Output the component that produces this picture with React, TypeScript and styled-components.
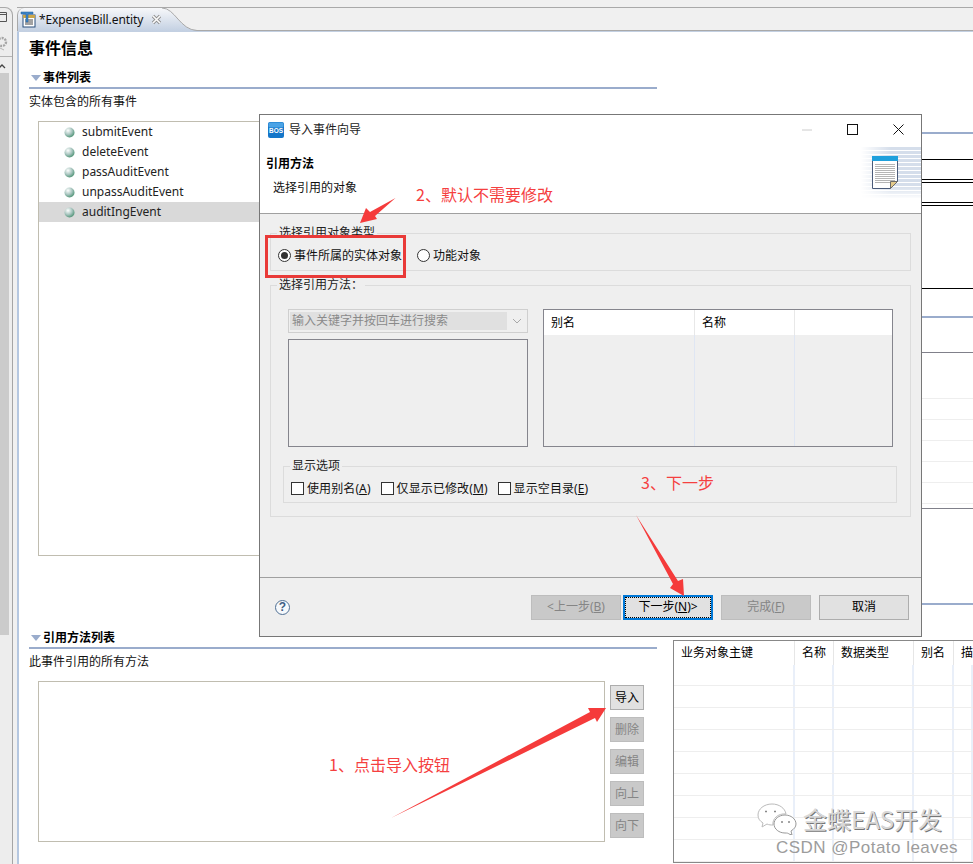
import React from "react";
import styled, { createGlobalStyle, css } from "styled-components";

const Global = createGlobalStyle`
  html, body { margin: 0; padding: 0; background: #f0f0f0; }
  * { box-sizing: border-box; }
`;

const FONT = `"Noto Sans", "Noto Sans CJK SC", sans-serif`;

const Page = styled.div`
  position: relative;
  width: 973px;
  height: 864px;
  overflow: hidden;
  display: flex;
  background: #f0f0f0;
  font: 12px/16px ${FONT};
  color: #111;
`;

/* left rail */
const Rail = styled.aside`
  flex: 0 0 13px;
  margin: 7px 4px 0 0;
  border-right: 1px solid #a5a5a5;
  border-top: 1px solid #a9a9a9;
  border-top-right-radius: 8px;
  background: #ededed;
  display: flex;
  flex-direction: column;
  overflow: hidden;
`;
const RailIcons = styled.div`
  height: 48px;
  flex: none;
  display: flex;
  flex-direction: column;
  align-items: flex-start;
`;
const RailDivider = styled.div`
  height: 1px;
  flex: none;
  background: #b5b5b5;
`;
const RailTrack = styled.div`
  height: 562px;
  flex: none;
  width: 9px;
  background: #cbcbcb;
`;

/* editor */
const Editor = styled.main`
  flex: 1;
  min-width: 0;
  display: flex;
  flex-direction: column;
`;
const TabStrip = styled.div`
  height: 24px;
  margin-top: 7px;
  flex: none;
  display: flex;
  align-items: flex-end;
  border-top: 1px solid #a9a9a9;
  border-bottom: 1px solid #a9a9a9;
`;
const TabBand = styled.div`
  height: 1px;
  flex: none;
  background: #c3d0e2;
`;
const Tab = styled.div`
  flex: 0 0 141px;
  height: 23px;
  margin-bottom: -1px;
  border-left: 1px solid #a9a9a9;
  border-top-left-radius: 7px;
  background: linear-gradient(#f7f8fa, #c3d0e2);
  display: flex;
  align-items: center;
  padding-left: 2px;
  gap: 3px;
  font-size: 12px;
  letter-spacing: -0.1px;
  white-space: nowrap;
`;
const TabIcon = styled.svg`
  flex: none;
`;
const TabLabel = styled.span`
  flex: none;
`;
const TabCurve = styled.svg`
  display: block;
  flex: none;
  margin-bottom: -1px;
`;
const TabClose = styled.svg`
  margin-left: 5px;
  flex: none;
  position: relative;
  z-index: 1;
`;
const Body = styled.div`
  flex: 1;
  min-height: 0;
  display: grid;
  grid-template-columns: 638px 300px;
  column-gap: 16px;
  background: #fff;
  border-left: 2px solid #b5c7e0;
`;
const LeftCol = styled.div`
  padding-left: 10px;
  display: flex;
  flex-direction: column;
`;
const PageTitle = styled.h1`
  margin: 5px 0 0;
  height: 22px;
  font-size: 16px;
  line-height: 22px;
  font-weight: 700;
  color: #000;
`;
const SectionHead = styled.div<{ $mt: number }>`
  margin-top: ${(p) => p.$mt}px;
  height: 20px;
  padding-top: 2px;
  display: flex;
  align-items: center;
  font-weight: 700;
  color: #000;
  width: 628px;
`;
const Caret = styled.span`
  width: 0;
  height: 0;
  margin: 0 2px 0 2px;
  border-left: 5px solid transparent;
  border-right: 5px solid transparent;
  border-top: 6px solid #9aaccc;
`;
const SectionRule = styled.div`
  width: 628px;
  height: 2px;
  background: #9aaccc;
`;
const SectionNote = styled.div`
  margin-top: 5px;
  height: 16px;
`;
const EventList = styled.ul`
  list-style: none;
  margin: 11px 0 0 9px;
  padding: 0;
  width: 570px;
  height: 435px;
  border: 1px solid #c0bdb0;
  background: #fff;
`;
const EventRow = styled.li<{ $selected?: boolean }>`
  height: 20px;
  display: flex;
  align-items: center;
  padding-left: 25px;
  gap: 7px;
  color: #222;
  ${(p) => p.$selected && css`background: #d9d9d9;`}
`;
const MethodArea = styled.div`
  margin: 11px 0 0 9px;
  display: flex;
  gap: 5px;
`;
const MethodList = styled.div`
  width: 567px;
  height: 161px;
  border: 1px solid #c0bdb0;
`;
const SideButtons = styled.div`
  margin-top: 4px;
  display: flex;
  flex-direction: column;
  gap: 7px;
`;
const SmallButton = styled.button<{ $off?: boolean }>`
  width: 34px;
  height: 25px;
  padding: 0;
  font: inherit;
  border: 1px solid ${(p) => (p.$off ? "#bdbdbd" : "#adadad")};
  background: ${(p) => (p.$off ? "#c9c9c9" : "#e1e1e1")};
  color: ${(p) => (p.$off ? "#858585" : "#000")};
`;

/* right column behind the dialog */
const RightCol = styled.div`
  display: flex;
  flex-direction: column;
  min-width: 0;
`;
const Rule = styled.div<{ $gap: number; $h: number; $c: string }>`
  flex: none;
  margin-top: ${(p) => p.$gap}px;
  height: ${(p) => p.$h}px;
  background: ${(p) => p.$c};
`;
const FieldTable = styled.div<{ $mt: number }>`
  margin-top: ${(p) => p.$mt}px;
  flex: none;
  border: 1px solid #888;
  border-right: 0;
  width: 300px;
  overflow: hidden;
`;
const TRow = styled.div<{ $cols: string; $h: number; $head?: boolean }>`
  display: grid;
  grid-template-columns: ${(p) => p.$cols};
  height: ${(p) => p.$h}px;
  background: #fff;
  ${(p) => !p.$head && css`border-bottom: 1px solid #eeeeee;`}
`;
const TCell = styled.div<{ $head?: boolean }>`
  padding-left: 7px;
  line-height: 23px;
  color: #000;
  white-space: nowrap;
  border-right: ${(p) => (p.$head ? "1px solid #e6e6e6" : "2px solid #e9eff9")};
`;

/* dialog */
const Dialog = styled.section`
  position: absolute;
  left: 259px;
  top: 114px;
  width: 663px;
  height: 523px;
  border: 1px solid #777;
  background: #efefef;
  display: flex;
  flex-direction: column;
`;
const TitleBar = styled.header`
  height: 29px;
  flex: none;
  background: #fff;
  display: flex;
  align-items: center;
  padding-left: 8px;
  gap: 5px;
  color: #222;
`;
const WindowControls = styled.div`
  margin-left: auto;
  display: flex;
  align-items: center;
  padding-right: 17px;
  gap: 35px;
`;
const Banner = styled.div`
  flex: none;
  height: 70px;
  background: #fff;
  border-bottom: 1px solid #a0a0a0;
  display: flex;
  justify-content: space-between;
  padding: 3px 0 0 6px;
`;
const BannerTitle = styled.div`
  margin-top: 9px;
  font-weight: 700;
  color: #000;
`;
const BannerDesc = styled.div`
  margin: 8px 0 0 7px;
`;
const DialogBody = styled.div`
  flex: none;
  height: 363px;
  padding: 11px 10px 0;
  display: flex;
  flex-direction: column;
`;
const Group = styled.fieldset<{ $h: number; $mt?: number; $ml?: number; $w?: number }>`
  margin: ${(p) => p.$mt || 0}px 0 0 ${(p) => p.$ml || 0}px;
  padding: 0;
  min-width: 0;
  border: 1px solid #dcdcdc;
  height: ${(p) => p.$h}px;
  ${(p) => p.$w && css`width: ${p.$w}px;`}
`;
const GroupLabel = styled.legend`
  margin-left: 6px;
  padding: 0 2px;
  height: 16px;
  line-height: 16px;
  color: #222;
`;
const RadioRow = styled.div`
  height: 29px;
  display: flex;
  align-items: center;
  padding-left: 7px;
  gap: 15px;
`;
const Choice = styled.label`
  display: flex;
  align-items: center;
  gap: 3px;
  white-space: nowrap;
`;
const CheckText = styled.span`
  letter-spacing: 0.1px;
`;
const RadioMark = styled.span<{ $on?: boolean }>`
  width: 13px;
  height: 13px;
  border-radius: 50%;
  border: 1px solid #333;
  background: #fff;
  display: flex;
  align-items: center;
  justify-content: center;
  &::after {
    content: "";
    width: 7px;
    height: 7px;
    border-radius: 50%;
    background: ${(p) => (p.$on ? "#333" : "transparent")};
  }
`;
const MethodGrid = styled.div`
  margin: 16px 0 0 17px;
  display: grid;
  grid-template-columns: 240px 350px;
  column-gap: 15px;
  height: 138px;
`;
const PickerCol = styled.div`
  display: flex;
  flex-direction: column;
  gap: 6px;
`;
const Combo = styled.div`
  height: 24px;
  border: 1px solid #cfcfcf;
  padding: 2px 2px 2px 1px;
  display: flex;
  align-items: center;
  justify-content: space-between;
`;
const ComboText = styled.div`
  width: 217px;
  height: 18px;
  background: #e0e0e0;
  color: #8a8a8a;
  line-height: 18px;
  padding-left: 2px;
  white-space: nowrap;
`;
const Chevron = styled.svg`
  margin-right: 3px;
`;
const Picker = styled.div`
  flex: 1;
  border: 1px solid #85858d;
`;
const AliasTable = styled.div`
  border: 1px solid #85858d;
  display: flex;
  flex-direction: column;
`;
const AliasBody = styled.div`
  flex: 1;
  display: grid;
  grid-template-columns: 151px 100px 1fr;
`;
const AliasCol = styled.div`
  border-right: 1px solid #dfe6f3;
  &:last-child { border-right: 0; }
`;
const AliasHead = styled(TCell)`
  line-height: 25px;
  border-right: 1px solid #e8e8e8;
  &:last-child { border-right: 0; }
`;
const CheckRow = styled.div`
  height: 29px;
  display: flex;
  align-items: center;
  padding-left: 7px;
  gap: 10px;
`;
const CheckMark = styled.span`
  width: 13px;
  height: 13px;
  border: 1px solid #333;
  background: #fff;
`;
const Footer = styled.footer`
  flex: 1;
  border-top: 1px solid #a0a0a0;
  display: flex;
  align-items: center;
  padding: 0 12px 0 15px;
`;
const Help = styled.span`
  width: 15px;
  height: 15px;
  border-radius: 50%;
  border: 1px solid #4f6f94;
  background: #f6f9fc;
  color: #3f5f84;
  font: 700 12px/13px "Liberation Sans", sans-serif;
  text-align: center;
`;
const WizardButtons = styled.div`
  margin-left: auto;
  display: flex;
  gap: 8px;
`;
const WizardButton = styled.button<{ $variant?: "off" | "focus" }>`
  width: 90px;
  height: 25px;
  padding: 0;
  font: inherit;
  border: 1px solid #adadad;
  background: #e1e1e1;
  color: #000;
  ${(p) =>
    p.$variant === "off" &&
    css`
      background: #c9c9c9;
      border-color: #bdbdbd;
      color: #858585;
    `}
  ${(p) =>
    p.$variant === "focus" &&
    css`
      margin-left: -6px;
      border: 2px solid #0078d7;
      outline: 1px dotted #000;
      outline-offset: -3px;
    `}
`;

/* annotations */
const Overlay = styled.svg`
  position: absolute;
  left: 0;
  top: 0;
  pointer-events: none;
`;
const Note = styled.div<{ $x: number; $y: number }>`
  position: absolute;
  left: ${(p) => p.$x}px;
  top: ${(p) => p.$y}px;
  font: 16px/22px "Noto Sans CJK SC", sans-serif;
  color: #f5403f;
  white-space: nowrap;
`;
const RedBox = styled.div`
  position: absolute;
  left: 265px;
  top: 235px;
  width: 141px;
  height: 43px;
  border: 3px solid #e93a38;
`;
const Mark = styled.div`
  position: absolute;
  left: 757px;
  top: 803px;
  display: flex;
  align-items: center;
  gap: 6px;
`;
const MarkName = styled.div`
  font: 24px/28px "Noto Sans CJK SC", "Liberation Sans", sans-serif;
  color: #d8d8d8;
  text-shadow: 1px 1px 0 #777;
  white-space: nowrap;
`;
const MarkCredit = styled.div`
  position: absolute;
  left: 776px;
  top: 838px;
  font: 17px/20px "Liberation Sans", sans-serif;
  color: #9c9c9c;
  letter-spacing: 0.47px;
  white-space: nowrap;
`;

const Ball = () => (
  <svg width="11" height="11" viewBox="0 0 11 11">
    <defs>
      <radialGradient id="ball" cx="0.35" cy="0.3" r="0.8">
        <stop offset="0" stopColor="#ffffff" />
        <stop offset="0.5" stopColor="#a9c6c0" />
        <stop offset="1" stopColor="#3f8a68" />
      </radialGradient>
    </defs>
    <circle cx="5.5" cy="5.5" r="5" fill="url(#ball)" />
  </svg>
);

const EntityIcon = () => (
  <TabIcon width="16" height="17" viewBox="0 0 16 17">
    <rect x="3" y="4" width="12" height="12" fill="#fff" stroke="#2a4f7a" />
    <rect x="3" y="4" width="12" height="3" fill="#caa64a" />
    <path d="M5 9h8M5 11h8M5 13h8" stroke="#444" />
    <path d="M1 1h12v2H8v8H6V3H1z" fill="#3f86c9" stroke="#1f5f9b" strokeWidth="0.5" />
  </TabIcon>
);

const BosLogo = () => (
  <svg width="16" height="16" viewBox="0 0 16 16">
    <rect width="16" height="16" rx="2" fill="#1576c9" />
    <rect x="0.5" y="0.5" width="15" height="5" rx="1.5" fill="#4ba3e6" />
    <text x="8" y="11" textAnchor="middle" fontSize="7" fontWeight="700" textLength="14" lengthAdjust="spacingAndGlyphs" fontFamily="Liberation Sans" fill="#fff">BOS</text>
  </svg>
);

const BannerArt = () => (
  <svg width="60" height="52" viewBox="0 0 60 52">
    <defs>
      <linearGradient id="fade" x1="0" x2="1" y1="0" y2="0">
        <stop offset="0" stopColor="#fff" />
        <stop offset="0.5" stopColor="#fff" stopOpacity="0" />
      </linearGradient>
      <linearGradient id="fadeV" x1="0" x2="0" y1="0" y2="1">
        <stop offset="0.75" stopColor="#fff" stopOpacity="0" />
        <stop offset="1" stopColor="#fff" />
      </linearGradient>
    </defs>
    {Array.from({ length: 13 }, (_, i) => (
      <rect key={i} x="0" y={i * 4} width="60" height="3" fill="#d5deeb" />
    ))}
    <rect width="60" height="52" fill="url(#fade)" />
    <rect width="60" height="52" fill="url(#fadeV)" />
    <path d="M11.5 9.5h25v25l-7 7h-18z" fill="#fff" stroke="#4a5a78" />
    <rect x="11" y="9" width="26" height="5" fill="#1fa0dc" />
    {[17, 19, 21, 23, 25, 27, 29, 31, 33, 35].map((y) => (
      <rect key={y} x="14" y={y} width="20" height="1" fill="#b5b5b5" />
    ))}
    <path d="M29.5 41.5v-7h7z" fill="#e2c98a" stroke="#6a6a6a" />
  </svg>
);

const MinIcon = () => (
  <svg width="10" height="10" viewBox="0 0 10 10">
    <path d="M0 5h10" stroke="#ccc" />
  </svg>
);
const MaxIcon = () => (
  <svg width="11" height="11" viewBox="0 0 11 11">
    <rect x="0.5" y="0.5" width="10" height="10" fill="none" stroke="#111" />
  </svg>
);
const CloseIcon = () => (
  <svg width="11" height="11" viewBox="0 0 11 11">
    <path d="M0.5 0.5l10 10M10.5 0.5l-10 10" stroke="#111" />
  </svg>
);

const events = ["submitEvent", "deleteEvent", "passAuditEvent", "unpassAuditEvent", "auditIngEvent"];
const sideButtons = ["导入", "删除", "编辑", "向上", "向下"];

const rules = [
  { gap: 100, h: 2, c: "#9aaccc" },
  { gap: 25, h: 1, c: "#000" },
  { gap: 19, h: 1, c: "#000" },
  { gap: 2, h: 1, c: "#000" },
  { gap: 19, h: 1, c: "#000" },
  { gap: 2, h: 1, c: "#000" },
  { gap: 82, h: 1, c: "#000" },
  { gap: 27, h: 2, c: "#9aaccc" },
  { gap: 34, h: 1, c: "#80808a" },
  { gap: 45, h: 1, c: "#eeeeee" },
  { gap: 20, h: 1, c: "#eeeeee" },
  { gap: 20, h: 1, c: "#eeeeee" },
  { gap: 20, h: 1, c: "#eeeeee" },
  { gap: 20, h: 1, c: "#eeeeee" },
  { gap: 20, h: 1, c: "#eeeeee" },
  { gap: 4, h: 1, c: "#80808a" },
  { gap: 94, h: 2, c: "#9aaccc" },
];

const fieldCols = "121px 39px 80px 40px 1fr";
const fieldHeads = ["业务对象主键", "名称", "数据类型", "别名", "描"];

export default function App() {
  return (
    <Page>
      <Global />
      <Rail>
        <RailIcons>
          <svg width="11" height="12" viewBox="0 0 11 12" style={{ marginTop: 3 }}>
            <path d="M-1 1.5h7.5v9H-1M-1 3.5h7.5" fill="none" stroke="#555" />
          </svg>
          <svg width="11" height="15" viewBox="0 0 11 15" style={{ marginTop: 13 }}>
            <circle cx="2" cy="6" r="4" fill="none" stroke="#a5a5a5" strokeWidth="2.4" strokeDasharray="2 1" />
            <path d="M0 12l4 2" stroke="#b5b5b5" />
          </svg>
        </RailIcons>
        <RailDivider />
        <svg width="11" height="16" viewBox="0 0 11 16" style={{ flex: "none" }}>
          <path d="M-1 11l3-3 3 3" fill="none" stroke="#444" strokeWidth="1.3" />
        </svg>
        <RailTrack />
      </Rail>
      <Editor>
        <TabStrip>
          <Tab>
            <EntityIcon />
            <TabLabel>*ExpenseBill.entity</TabLabel>
            <TabClose width="11" height="11" viewBox="0 0 11 11">
              <path d="M2 2l7 7M9 2l-7 7" stroke="#8e8e8e" strokeWidth="3.2" />
              <path d="M2 2l7 7M9 2l-7 7" stroke="#fbfbfb" strokeWidth="1.6" />
            </TabClose>
          </Tab>
          <TabCurve width="35" height="23" viewBox="0 0 35 23">
            <defs>
              <linearGradient id="tabfill" x1="0" x2="0" y1="0" y2="1">
                <stop offset="0" stopColor="#f7f8fa" />
                <stop offset="1" stopColor="#c3d0e2" />
              </linearGradient>
            </defs>
            <path d="M0 0C13 0 18 22 35 22.5V23H0z" fill="url(#tabfill)" />
            <path d="M0 0C13 0 18 22 35 22.5" fill="none" stroke="#a9a9a9" />
          </TabCurve>
        </TabStrip>
        <TabBand />
        <Body>
          <LeftCol>
            <PageTitle>事件信息</PageTitle>
            <SectionHead $mt={8}>
              <Caret />
              事件列表
            </SectionHead>
            <SectionRule />
            <SectionNote>实体包含的所有事件</SectionNote>
            <EventList>
              {events.map((e) => (
                <EventRow key={e} $selected={e === "auditIngEvent"}>
                  <Ball />
                  {e}
                </EventRow>
              ))}
            </EventList>
            <SectionHead $mt={71}>
              <Caret />
              引用方法列表
            </SectionHead>
            <SectionRule />
            <SectionNote>此事件引用的所有方法</SectionNote>
            <MethodArea>
              <MethodList />
              <SideButtons>
                {sideButtons.map((b, i) => (
                  <SmallButton key={b} $off={i > 0}>
                    {b}
                  </SmallButton>
                ))}
              </SideButtons>
            </MethodArea>
          </LeftCol>
          <RightCol>
            {rules.map((r, i) => (
              <Rule key={i} $gap={r.gap} $h={r.h} $c={r.c} />
            ))}
            <FieldTable $mt={35}>
              <TRow $cols={fieldCols} $h={24} $head>
                {fieldHeads.map((h) => (
                  <TCell key={h} $head>
                    {h}
                  </TCell>
                ))}
              </TRow>
              {Array.from({ length: 9 }, (_, i) => (
                <TRow key={i} $cols={fieldCols} $h={i === 0 ? 21 : 22}>
                  {fieldHeads.map((h) => (
                    <TCell key={h} />
                  ))}
                </TRow>
              ))}
            </FieldTable>
          </RightCol>
        </Body>
      </Editor>

      <Dialog>
        <TitleBar>
          <BosLogo />
          导入事件向导
          <WindowControls>
            <MinIcon />
            <MaxIcon />
            <CloseIcon />
          </WindowControls>
        </TitleBar>
        <Banner>
          <div>
            <BannerTitle>引用方法</BannerTitle>
            <BannerDesc>选择引用的对象</BannerDesc>
          </div>
          <BannerArt />
        </Banner>
        <DialogBody>
          <Group $h={46}>
            <GroupLabel>选择引用对象类型</GroupLabel>
            <RadioRow>
              <Choice>
                <RadioMark $on />
                事件所属的实体对象
              </Choice>
              <Choice>
                <RadioMark />
                功能对象
              </Choice>
            </RadioRow>
          </Group>
          <Group $h={240} $mt={6}>
            <GroupLabel>选择引用方法：</GroupLabel>
            <MethodGrid>
              <PickerCol>
                <Combo>
                  <ComboText>输入关键字并按回车进行搜索</ComboText>
                  <Chevron width="10" height="6" viewBox="0 0 10 6">
                    <path d="M1 1l4 4 4-4" fill="none" stroke="#a8a8a8" />
                  </Chevron>
                </Combo>
                <Picker />
              </PickerCol>
              <AliasTable>
                <TRow $cols="151px 100px 1fr" $h={25} $head>
                  <AliasHead $head>别名</AliasHead>
                  <AliasHead $head>名称</AliasHead>
                  <AliasHead $head />
                </TRow>
                <AliasBody>
                  <AliasCol />
                  <AliasCol />
                  <AliasCol />
                </AliasBody>
              </AliasTable>
            </MethodGrid>
            <Group $h={45} $mt={11} $ml={12} $w={614}>
              <GroupLabel>显示选项</GroupLabel>
              <CheckRow>
                <Choice>
                  <CheckMark />
                  <CheckText>使用别名(<u>A</u>)</CheckText>
                </Choice>
                <Choice>
                  <CheckMark />
                  <CheckText>仅显示已修改(<u>M</u>)</CheckText>
                </Choice>
                <Choice>
                  <CheckMark />
                  <CheckText>显示空目录(<u>E</u>)</CheckText>
                </Choice>
              </CheckRow>
            </Group>
          </Group>
        </DialogBody>
        <Footer>
          <Help>?</Help>
          <WizardButtons>
            <WizardButton $variant="off">&lt;上一步(<u>B</u>)</WizardButton>
            <WizardButton $variant="focus">下一步(<u>N</u>)&gt;</WizardButton>
            <WizardButton $variant="off">完成(<u>F</u>)</WizardButton>
            <WizardButton>取消</WizardButton>
          </WizardButtons>
        </Footer>
      </Dialog>

      <RedBox />
      <Note $x={416} $y={183}>2、默认不需要修改</Note>
      <Note $x={641} $y={471}>3、下一步</Note>
      <Note $x={329} $y={753}>1、点击导入按钮</Note>
      <Overlay width="973" height="864" viewBox="0 0 973 864">
        <polygon points="391,818 590,712 588,708 606,708 597,722 595,718" fill="#f53b3b" />
        <polygon points="395.5,198 375,216 377,219 360,223 366,208 370,212" fill="#f53b3b" />
        <polygon points="636,515 678,581 683,579 684,596 670,588 673,584" fill="#f53b3b" />
      </Overlay>
      <Mark>
        <svg width="40" height="32" viewBox="0 0 40 32">
          <path d="M15 1C7 1 1 6 1 12c0 4 2 6 5 8l-1 4 5-3c2 1 4 1 6 1-1-6 5-12 13-11C28 5 22 1 15 1z" fill="#fff" stroke="#bbb" />
          <path d="M28 12c-6 0-11 4-11 9s5 9 11 9c2 0 3 0 4 1l3 1-1-4c3-2 5-4 5-7 0-5-5-9-11-9z" fill="#fff" stroke="#999" />
          <path d="M8 8.5h2M17 8.5h2M24 19h2M31 19h2" stroke="#888" strokeWidth="1.5" />
        </svg>
        <MarkName>金蝶EAS开发</MarkName>
      </Mark>
      <MarkCredit>CSDN @Potato leaves</MarkCredit>
    </Page>
  );
}
